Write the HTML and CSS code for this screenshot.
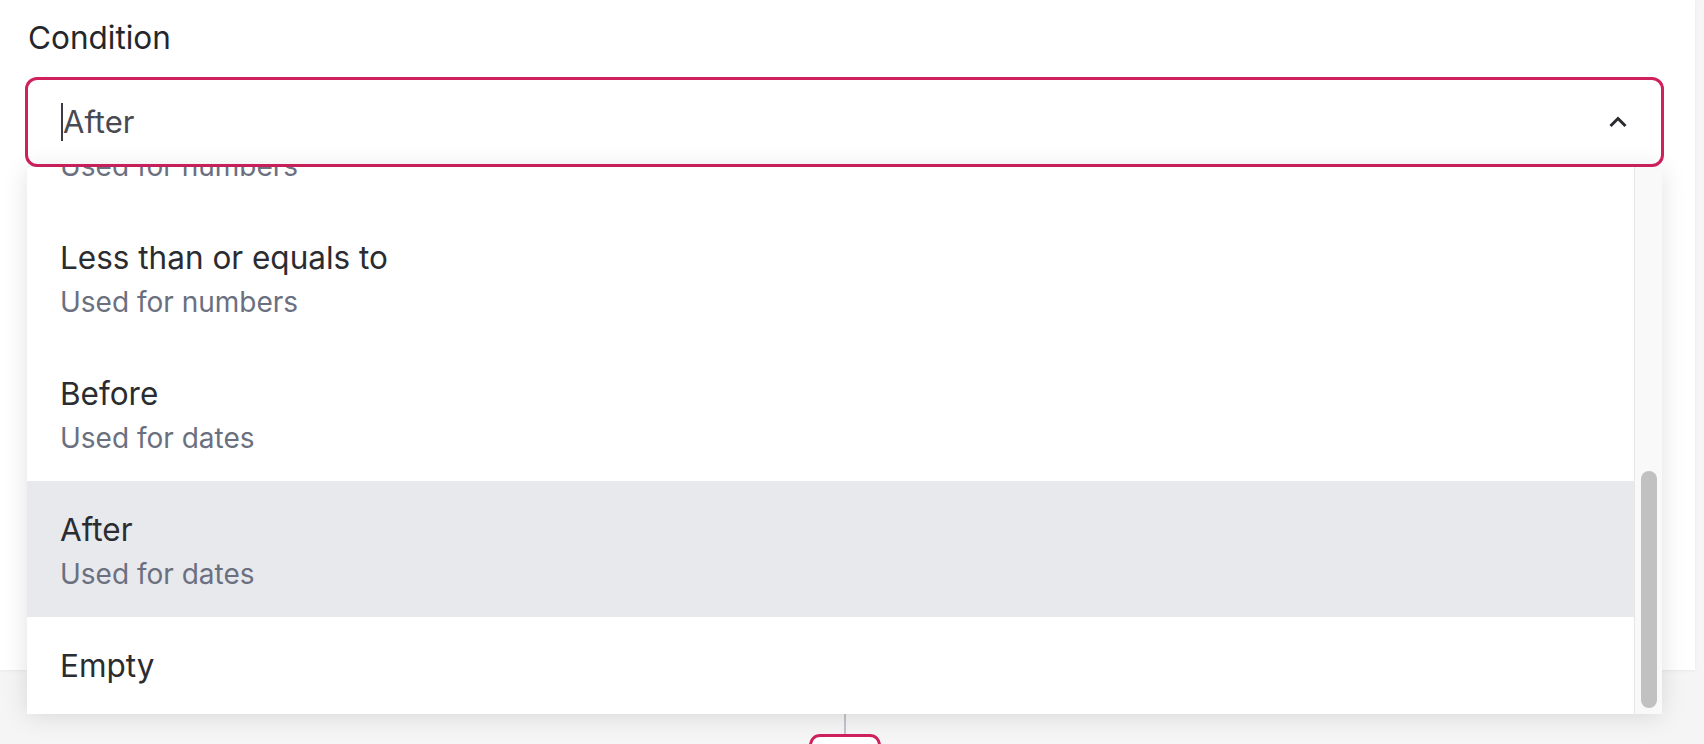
FILE: index.html
```html
<!DOCTYPE html>
<html lang="en">
<head>
<meta charset="utf-8">
<title>Condition</title>
<link rel="stylesheet" href="styles.css">
</head>
<body>
<div class="card">
  <div class="label">Condition</div>
  <div class="field">
    <div class="input">
      <span class="caret"></span><span class="value">After</span>
      <svg class="chev" width="24" height="24" viewBox="0 0 24 24"><path d="M4.5 16 L12 8.5 L19.5 16" fill="none" stroke="#2a2b30" stroke-width="3" stroke-linecap="butt" stroke-linejoin="miter"/></svg>
    </div>
    <div class="dropdown">
      <div class="list">
        <div class="items">
          <div class="opt"><div class="t">Greater than or equals to</div><div class="s">Used for numbers</div></div>
          <div class="opt"><div class="t">Less than or equals to</div><div class="s">Used for numbers</div></div>
          <div class="opt"><div class="t">Before</div><div class="s">Used for dates</div></div>
          <div class="opt active"><div class="t">After</div><div class="s">Used for dates</div></div>
          <div class="opt"><div class="t">Empty</div></div>
        </div>
      </div>
      <div class="track"><div class="thumb"></div></div>
    </div>
  </div>
</div>
<div class="below">
  <div class="line"></div>
  <div class="addbox"></div>
</div>
</body>
</html>
```
FILE: styles.css
```css
html, body {
  margin: 0;
  padding: 0;
}
body {
  background: #f5f5f6;
  font-family: Inter, "Noto Sans", sans-serif;
  width: 1704px;
  height: 744px;
  overflow: hidden;
}
.card {
  width: 1695px;
  height: 670px;
  box-sizing: border-box;
  background: #ffffff;
  padding: 15px 31px 0 25px;
  box-shadow: 0 1px 3px rgba(0,0,0,0.05);
  position: relative;
  z-index: 1;
}
.label {
  font-size: 31.5px;
  line-height: 45px;
  font-weight: 400;
  color: #25262b;
  padding-left: 3px;
  margin-bottom: 17px;
}
.field {
  position: relative;
}
.input {
  height: 90px;
  box-sizing: border-box;
  border: 3px solid #d0215f;
  border-radius: 12px;
  display: flex;
  align-items: center;
  padding: 0 31px 0 33px;
  background: #fff;
}
.caret {
  width: 2px;
  height: 38px;
  background: #3a3c44;
}
.value {
  font-size: 31px;
  line-height: 40px;
  color: #474a53;
  flex: 1;
}
.chev {
  display: block;
  flex: none;
}
.dropdown {
  position: absolute;
  top: 100%;
  left: 2px;
  right: 2px;
  height: 547px;
  background: #fff;
  display: flex;
  box-shadow: 0 2px 24px rgba(0,0,0,0.12);
  z-index: 2;
}
.list {
  flex: 1;
  overflow: hidden;
}
.items {
  margin-top: -94px;
}
.opt {
  height: 136px;
  box-sizing: border-box;
  padding: 25px 33px 22px;
}
.opt.active {
  background: #e8e9ed;
}
.t {
  font-size: 31.5px;
  line-height: 47px;
  color: #2b2c31;
}
.s {
  font-size: 28px;
  line-height: 42px;
  color: #6b7080;
}
.track {
  width: 28px;
  box-sizing: border-box;
  border-left: 1px solid #e6e6e6;
  background: #f9f9f9;
  display: flex;
  flex-direction: column;
  justify-content: flex-end;
  align-items: center;
  padding: 0 0 6px 0;
}
.thumb {
  width: 16px;
  height: 237px;
  border-radius: 8px;
  background: #c1c1c1;
}
.below {
  width: 1690px;
  display: flex;
  flex-direction: column;
  align-items: center;
}
.line {
  width: 2px;
  height: 64px;
  background: #c2c4ca;
}
.addbox {
  width: 72px;
  height: 60px;
  box-sizing: border-box;
  border: 3px solid #d0215f;
  border-radius: 11px;
  background: #fff;
}
```
